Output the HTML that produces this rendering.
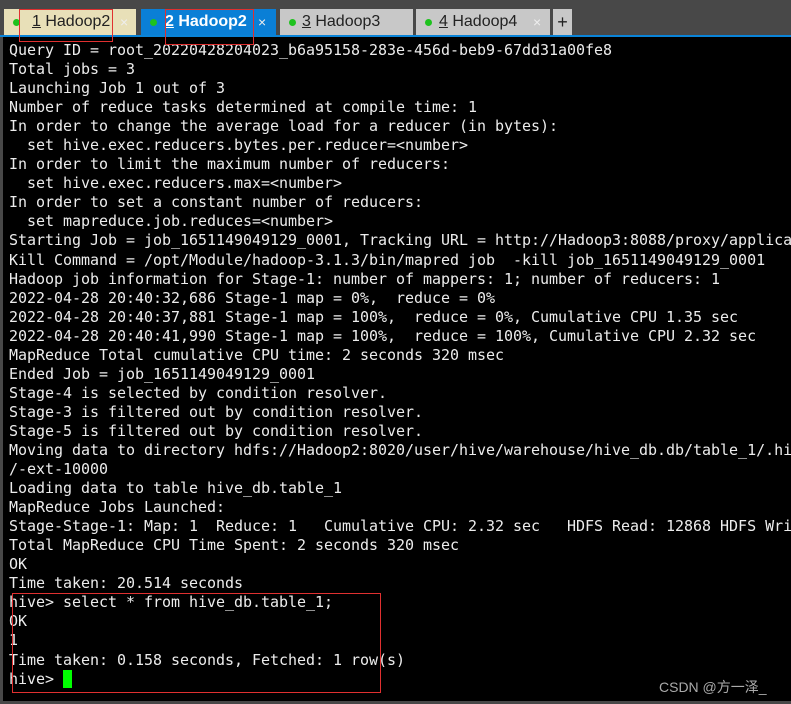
<!DOCTYPE html>
<html><head><meta charset="utf-8"><style>
body{margin:0;width:791px;height:704px;background:#484848;position:relative;overflow:hidden;font-family:"Liberation Sans","DejaVu Sans",sans-serif}
.tab{position:absolute;top:9px;height:26px;font-size:16px;line-height:26px;color:#222}
.dot{position:absolute;top:10px;left:9px;width:7px;height:7px;border-radius:50%;background:#1ec21e}
.x{position:absolute;top:0;font-size:14px;color:#eee}
#term{position:absolute;left:3px;top:37px;width:788px;height:664px;background:#000;overflow:hidden}
#bl{position:absolute;left:0;top:35px;width:791px;height:2px;background:#0a84d8}
pre{position:absolute;left:6px;top:4px;margin:0;font-family:"DejaVu Sans Mono",monospace;font-size:15px;letter-spacing:-0.03px;line-height:19.05px;color:#ececec;white-space:pre}
.box{position:absolute;border:1px solid #e03030}
</style></head><body>
<div class="tab" style="left:4px;width:132px;background:#e8e0b8"><div class="dot"></div><span style="position:absolute;left:28px"><u>1</u> Hadoop2</span><span class="x" style="left:116px">×</span></div>
<div class="tab" style="left:141px;width:135px;background:#0a7fd6;color:#fff;font-weight:bold"><div class="dot"></div><span style="position:absolute;left:24px"><u>2</u> Hadoop2</span><span class="x" style="left:117px;font-weight:normal">×</span></div>
<div class="tab" style="left:280px;width:133px;background:#c8c8c8"><div class="dot"></div><span style="position:absolute;left:22px"><u>3</u> Hadoop3</span></div>
<div class="tab" style="left:416px;width:134px;background:#c8c8c8"><div class="dot"></div><span style="position:absolute;left:23px"><u>4</u> Hadoop4</span><span class="x" style="left:117px">×</span></div>
<div class="tab" style="left:553px;width:19px;background:#c8c8c8;text-align:center;font-size:18px">+</div>
<div id="bl"></div>
<div id="term"><pre>Query ID = root_20220428204023_b6a95158-283e-456d-beb9-67dd31a00fe8
Total jobs = 3
Launching Job 1 out of 3
Number of reduce tasks determined at compile time: 1
In order to change the average load for a reducer (in bytes):
  set hive.exec.reducers.bytes.per.reducer=&lt;number&gt;
In order to limit the maximum number of reducers:
  set hive.exec.reducers.max=&lt;number&gt;
In order to set a constant number of reducers:
  set mapreduce.job.reduces=&lt;number&gt;
Starting Job = job_1651149049129_0001, Tracking URL = http://Hadoop3:8088/proxy/application_
Kill Command = /opt/Module/hadoop-3.1.3/bin/mapred job  -kill job_1651149049129_0001
Hadoop job information for Stage-1: number of mappers: 1; number of reducers: 1
2022-04-28 20:40:32,686 Stage-1 map = 0%,  reduce = 0%
2022-04-28 20:40:37,881 Stage-1 map = 100%,  reduce = 0%, Cumulative CPU 1.35 sec
2022-04-28 20:40:41,990 Stage-1 map = 100%,  reduce = 100%, Cumulative CPU 2.32 sec
MapReduce Total cumulative CPU time: 2 seconds 320 msec
Ended Job = job_1651149049129_0001
Stage-4 is selected by condition resolver.
Stage-3 is filtered out by condition resolver.
Stage-5 is filtered out by condition resolver.
Moving data to directory hdfs://Hadoop2:8020/user/hive/warehouse/hive_db.db/table_1/.hive
/-ext-10000
Loading data to table hive_db.table_1
MapReduce Jobs Launched:
Stage-Stage-1: Map: 1  Reduce: 1   Cumulative CPU: 2.32 sec   HDFS Read: 12868 HDFS Write
Total MapReduce CPU Time Spent: 2 seconds 320 msec
OK
Time taken: 20.514 seconds
hive&gt; select * from hive_db.table_1;
OK
1
Time taken: 0.158 seconds, Fetched: 1 row(s)
hive&gt; <span style="background:#0f0"> </span></pre></div>
<div class="box" style="left:19px;top:9px;width:92px;height:31px"></div>
<div class="box" style="left:165px;top:9px;width:87px;height:34px"></div>
<div class="box" style="left:12px;top:593px;width:367px;height:98px"></div>
<div style="position:absolute;left:659px;top:677px;font-size:14px;color:#aaa;font-family:'Liberation Sans','Noto Sans CJK SC',sans-serif">CSDN @方一泽_</div>
</body></html>
